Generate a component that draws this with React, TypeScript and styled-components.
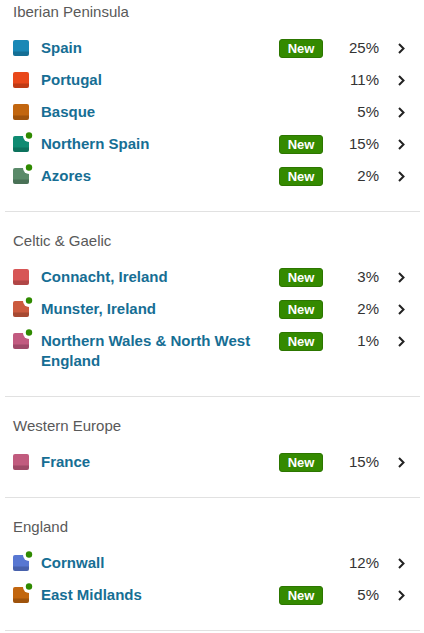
import React from 'react';
import styled, { createGlobalStyle } from 'styled-components';

interface Region {
  name: string;
  color: string;
  pct: number;
  isNew?: boolean;
  dot?: boolean;
}

interface Group {
  title: string;
  regions: Region[];
}

const groups: Group[] = [
  {
    title: 'Iberian Peninsula',
    regions: [
      { name: 'Spain', color: '#1a88b6', pct: 25, isNew: true },
      { name: 'Portugal', color: '#e9481a', pct: 11 },
      { name: 'Basque', color: '#c2660f', pct: 5 },
      { name: 'Northern Spain', color: '#0f8b72', pct: 15, isNew: true, dot: true },
      { name: 'Azores', color: '#5a8a69', pct: 2, isNew: true, dot: true },
    ],
  },
  {
    title: 'Celtic & Gaelic',
    regions: [
      { name: 'Connacht, Ireland', color: '#d75656', pct: 3, isNew: true },
      { name: 'Munster, Ireland', color: '#cb5a3e', pct: 2, isNew: true, dot: true },
      { name: 'Northern Wales & North West England', color: '#c25a80', pct: 1, isNew: true, dot: true },
    ],
  },
  {
    title: 'Western Europe',
    regions: [{ name: 'France', color: '#c15b7e', pct: 15, isNew: true }],
  },
  {
    title: 'England',
    regions: [
      { name: 'Cornwall', color: '#5877d2', pct: 12, dot: true },
      { name: 'East Midlands', color: '#c2660f', pct: 5, isNew: true, dot: true },
    ],
  },
];

const GlobalStyle = createGlobalStyle`
  body {
    margin: 0;
    background: #fff;
    font-family: "Liberation Sans", Arial, sans-serif;
  }
`;

const Page = styled.div`
  width: 424px;
`;

const Section = styled.section<{ $first?: boolean }>`
  margin: 0 4px 0 5px;
  padding: ${(p) => (p.$first ? '2px' : '19px')} 8px 20px 8px;
  border-bottom: 1px solid #e1e1e1;
`;

const Heading = styled.h3`
  margin: 0 0 9px;
  font-size: 15px;
  line-height: 20px;
  font-weight: 400;
  color: #595959;
`;

const Row = styled.div`
  display: grid;
  grid-template-columns: 16px 1fr 44px 63px 26px;
  align-items: start;
  padding: 7px 0 5px;
  line-height: 20px;
`;

const IconWrap = styled.div`
  margin-top: 2px;
  width: 16px;
  height: 16px;
`;

const Name = styled.span`
  margin-left: 12px;
  padding-right: 12px;
  font-size: 15px;
  font-weight: 700;
  color: #166e94;
`;

const Badge = styled.span`
  box-sizing: border-box;
  display: flex;
  align-items: center;
  justify-content: center;
  height: 19px;
  margin-top: 1px;
  border: 1px solid #2c7600;
  border-radius: 3px;
  background: #348a00;
  color: #fff;
  font-size: 13px;
  font-weight: 700;
`;

const Pct = styled.span`
  text-align: right;
  padding-right: 7px;
  font-size: 15px;
  color: #333;
`;

const Chevron = styled.span`
  display: flex;
  align-items: center;
  height: 20px;
  padding-left: 12px;
`;

const RegionIcon: React.FC<{ color: string; dot?: boolean }> = ({ color, dot }) => (
  <IconWrap>
    <svg width="16" height="16" viewBox="0 0 16 16" style={{ overflow: 'visible' }}>
      <rect x="0" y="0" width="16" height="16" rx="2" fill={color} />
      <path d="M0 11.5h16V14a2 2 0 0 1-2 2H2a2 2 0 0 1-2-2z" fill="rgba(0,0,0,0.18)" />
      {dot && (
        <>
          <circle cx="16" cy="0" r="6" fill="#fff" />
          <circle cx="16" cy="-0.5" r="3.2" fill="#2f8a00" />
        </>
      )}
    </svg>
  </IconWrap>
);

export default function App() {
  return (
    <Page>
      <GlobalStyle />
      {groups.map((g, i) => (
        <Section key={g.title} $first={i === 0}>
          <Heading>{g.title}</Heading>
          {g.regions.map((r) => (
            <Row key={r.name}>
              <RegionIcon color={r.color} dot={r.dot} />
              <Name>{r.name}</Name>
              {r.isNew ? <Badge>New</Badge> : <span />}
              <Pct>{r.pct}%</Pct>
              <Chevron>
                <svg width="7" height="11" viewBox="0 0 7 11">
                  <path d="M1 1l4.5 4.5L1 10" fill="none" stroke="#222" strokeWidth="2" />
                </svg>
              </Chevron>
            </Row>
          ))}
        </Section>
      ))}
    </Page>
  );
}
